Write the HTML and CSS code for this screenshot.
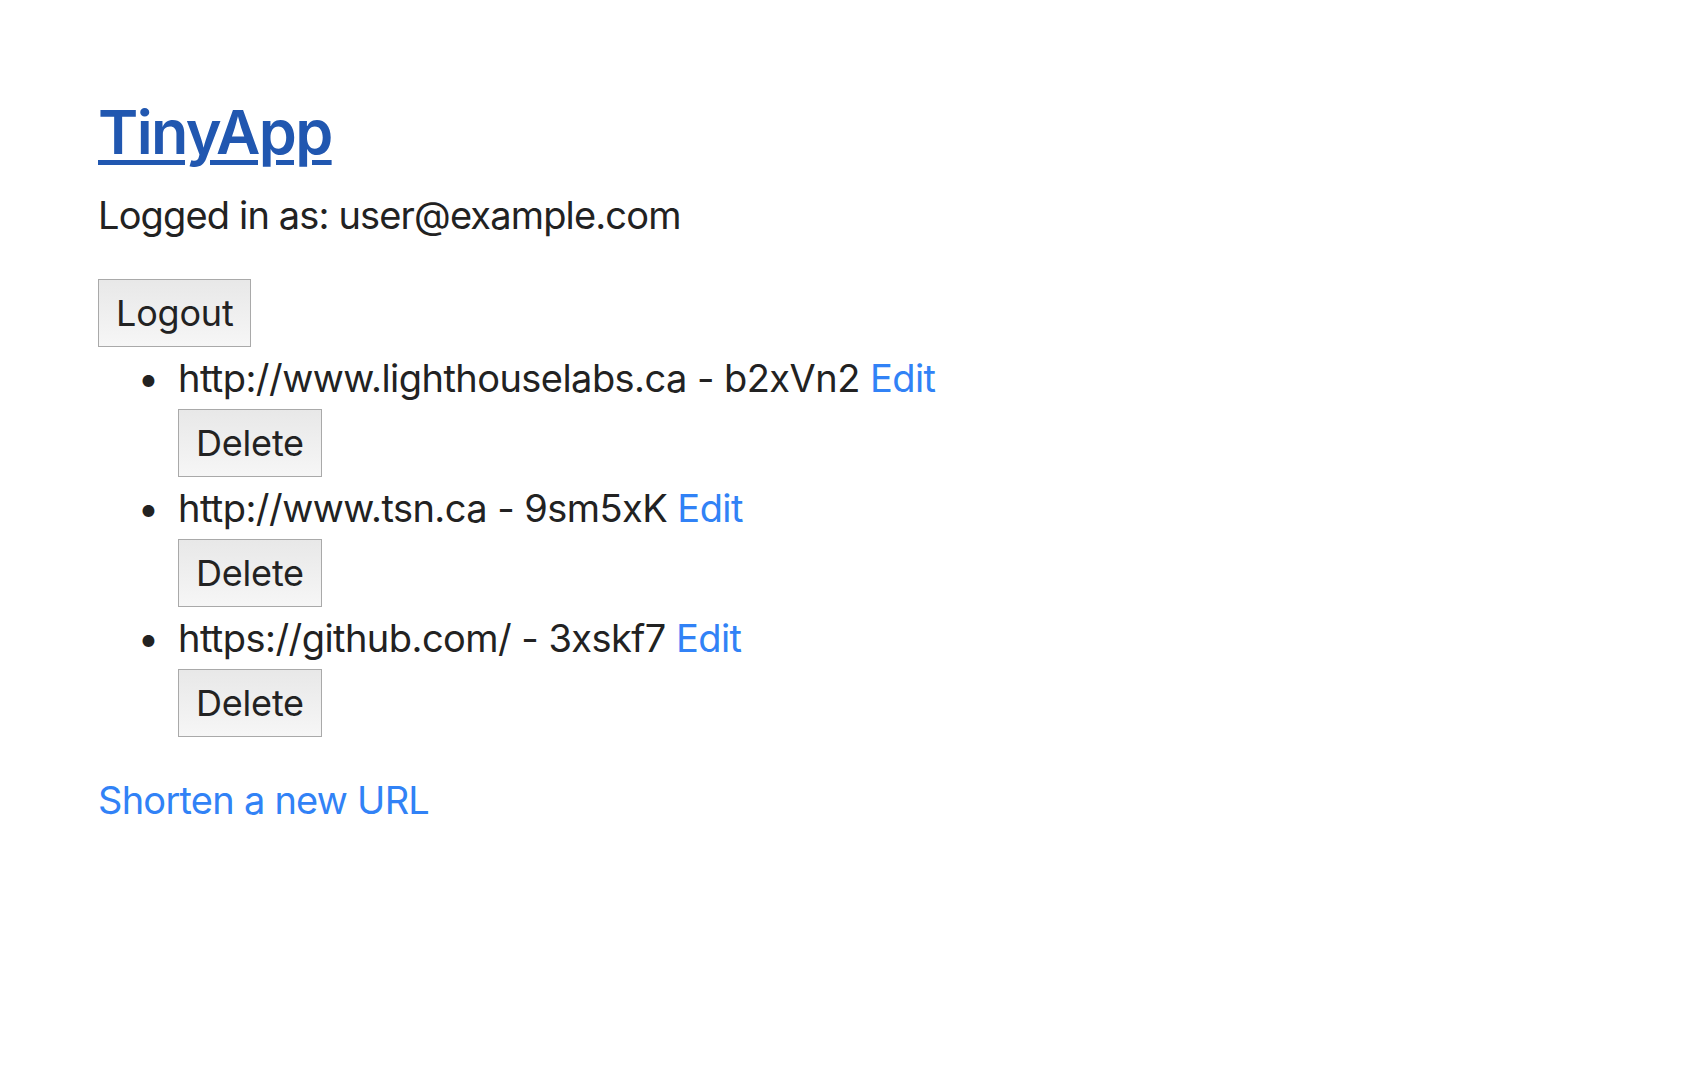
FILE: index.html
```html
<!DOCTYPE html>
<html lang="en">
<head>
<meta charset="utf-8">
<title>TinyApp</title>
<link rel="stylesheet" href="styles.css">
</head>
<body>
<div class="page">
  <header class="header">
    <h1 class="title"><a href="#" class="title-link">TinyApp</a></h1>
    <p class="login">Logged in as: user@example.com</p>
    <form class="logout-form"><button type="button" class="btn">Logout</button></form>
  </header>
  <main>
    <ul class="urls">
      <li class="url-item">
        <span class="url-line">http://www.lighthouselabs.ca - b2xVn2 <a href="#" class="link">Edit</a></span>
        <form class="del-form"><button type="button" class="btn">Delete</button></form>
      </li>
      <li class="url-item">
        <span class="url-line">http://www.tsn.ca - 9sm5xK <a href="#" class="link">Edit</a></span>
        <form class="del-form"><button type="button" class="btn">Delete</button></form>
      </li>
      <li class="url-item">
        <span class="url-line">https://github.com/ - 3xskf7 <a href="#" class="link">Edit</a></span>
        <form class="del-form"><button type="button" class="btn">Delete</button></form>
      </li>
    </ul>
    <p class="new-url"><a href="#" class="link">Shorten a new URL</a></p>
  </main>
</div>
</body>
</html>
```
FILE: styles.css
```css
html, body {
  margin: 0;
  padding: 0;
  background: #ffffff;
}
body {
  font-family: Inter, "Noto Sans", "Liberation Sans", sans-serif;
  font-size: 38px;
  letter-spacing: -0.75px;
  color: #222222;
}
.page {
  padding: 95px 0 0 98px;
}
.title {
  margin: 0;
  font-size: 61px;
  line-height: 74px;
  font-weight: 600;
  letter-spacing: -1.6px;
}
.title-link {
  color: #2157b0;
  text-decoration: underline;
  text-decoration-thickness: 5px;
  text-underline-offset: 6px;
}
.login {
  margin: 24px 0 0 0;
  line-height: 44px;
  letter-spacing: -0.85px;
}
.logout-form {
  margin: 42px 0 0 0;
}
.btn {
  display: block;
  height: 68px;
  padding: 0 17px;
  font-family: inherit;
  font-size: 36px;
  letter-spacing: -0.2px;
  color: #222222;
  border: 1px solid #a9a9a9;
  border-radius: 0;
  background: linear-gradient(#e8e8e8, #f6f6f6);
}
.urls {
  margin: 0;
  padding: 0 0 0 80px;
  list-style: disc;
}
.url-item {
  line-height: 62px;
}
.url-item::marker {
  content: "\2022\2002";
  letter-spacing: 0;
}
.url-line {
  display: block;
  letter-spacing: -0.55px;
}
.del-form {
  margin: 0;
}
.link {
  color: #3182f6;
  text-decoration: none;
}
.new-url {
  margin: 41px 0 0 0;
  line-height: 44px;
}
```
